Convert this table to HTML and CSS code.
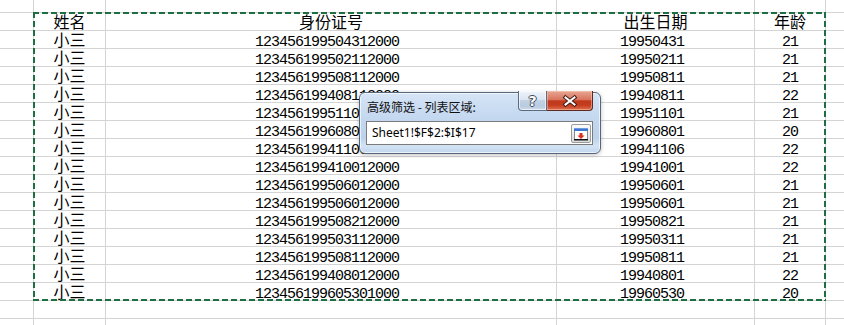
FILE: index.html
```html
<!DOCTYPE html>
<html lang="zh-CN">
<head>
<meta charset="utf-8">
<title>高级筛选</title>
<link rel="stylesheet" href="styles.css">
</head>
<body>
<div class="sheet">
  <div class="grid">
    <div class="c"></div><div class="c"></div><div class="c"></div><div class="c"></div><div class="c"></div><div class="c end"></div>

    <div class="c"></div><div class="c cjk">姓名</div><div class="c cjk">身份证号</div><div class="c cjk">出生日期</div><div class="c cjk">年龄</div><div class="c end"></div>

    <div class="c"></div><div class="c cjk">小三</div><div class="c num id">123456199504312000</div><div class="c num date">19950431</div><div class="c num">21</div><div class="c end"></div>
    <div class="c"></div><div class="c cjk">小三</div><div class="c num id">123456199502112000</div><div class="c num date">19950211</div><div class="c num">21</div><div class="c end"></div>
    <div class="c"></div><div class="c cjk">小三</div><div class="c num id">123456199508112000</div><div class="c num date">19950811</div><div class="c num">21</div><div class="c end"></div>
    <div class="c"></div><div class="c cjk">小三</div><div class="c num id">123456199408112000</div><div class="c num date">19940811</div><div class="c num">22</div><div class="c end"></div>
    <div class="c"></div><div class="c cjk">小三</div><div class="c num id">123456199511012000</div><div class="c num date">19951101</div><div class="c num">21</div><div class="c end"></div>
    <div class="c"></div><div class="c cjk">小三</div><div class="c num id">123456199608012000</div><div class="c num date">19960801</div><div class="c num">20</div><div class="c end"></div>
    <div class="c"></div><div class="c cjk">小三</div><div class="c num id">123456199411062000</div><div class="c num date">19941106</div><div class="c num">22</div><div class="c end"></div>
    <div class="c"></div><div class="c cjk">小三</div><div class="c num id">123456199410012000</div><div class="c num date">19941001</div><div class="c num">22</div><div class="c end"></div>
    <div class="c"></div><div class="c cjk">小三</div><div class="c num id">123456199506012000</div><div class="c num date">19950601</div><div class="c num">21</div><div class="c end"></div>
    <div class="c"></div><div class="c cjk">小三</div><div class="c num id">123456199506012000</div><div class="c num date">19950601</div><div class="c num">21</div><div class="c end"></div>
    <div class="c"></div><div class="c cjk">小三</div><div class="c num id">123456199508212000</div><div class="c num date">19950821</div><div class="c num">21</div><div class="c end"></div>
    <div class="c"></div><div class="c cjk">小三</div><div class="c num id">123456199503112000</div><div class="c num date">19950311</div><div class="c num">21</div><div class="c end"></div>
    <div class="c"></div><div class="c cjk">小三</div><div class="c num id">123456199508112000</div><div class="c num date">19950811</div><div class="c num">21</div><div class="c end"></div>
    <div class="c"></div><div class="c cjk">小三</div><div class="c num id">123456199408012000</div><div class="c num date">19940801</div><div class="c num">22</div><div class="c end"></div>
    <div class="c"></div><div class="c cjk">小三</div><div class="c num id">123456199605301000</div><div class="c num date">19960530</div><div class="c num">20</div><div class="c end"></div>

    <div class="c"></div><div class="c"></div><div class="c"></div><div class="c"></div><div class="c"></div><div class="c end"></div>

    <div class="c last"></div><div class="c last"></div><div class="c last"></div><div class="c last"></div><div class="c last"></div><div class="c last end"></div>
  </div>

  <div class="marquee"></div>

  <div class="dialog">
    <div class="titlebar">
      <span class="title">高级筛选 - 列表区域:</span>
      <div class="caption-buttons">
        <div class="btn-help"><span class="qmark">?</span></div>
        <div class="btn-close">
          <svg width="46" height="20" viewBox="0 0 46 20">
            <path d="M18.5 6.5 L27.5 13.5 M27.5 6.5 L18.5 13.5" stroke="#3b1a14" stroke-width="4" stroke-linecap="square" fill="none"/>
            <path d="M18.5 6.5 L27.5 13.5 M27.5 6.5 L18.5 13.5" stroke="#ffffff" stroke-width="2" stroke-linecap="square" fill="none"/>
          </svg>
        </div>
      </div>
    </div>
    <div class="refedit">
      <span class="reftext">Sheet1!$F$2:$I$17</span>
      <div class="collapse">
        <svg width="16" height="14" viewBox="0 0 16 14">
          <rect x="1.5" y="1.5" width="13" height="11" fill="#ffffff" stroke="#8a8a8a"/>
          <rect x="1" y="1" width="14" height="3" fill="#3b76cf"/>
          <rect x="1" y="1" width="14" height="1" fill="#6c9be0"/>
          <rect x="1" y="12" width="14" height="1.5" fill="#111111"/>
          <path d="M6.5 6 H9.5 V8.5 H11.5 L8 12 L4.5 8.5 H6.5 Z" fill="#d8301c"/>
        </svg>
      </div>
    </div>
  </div>
</div>
</body>
</html>
```

FILE: styles.css
```css
html, body {
  margin: 0;
  padding: 0;
  background: #ffffff;
}

.sheet {
  position: relative;
  width: 844px;
  height: 325px;
  overflow: hidden;
  background: #ffffff;
}

.grid {
  display: grid;
  grid-template-columns: 34px 72px 451px 198px 71px 1fr;
  grid-template-rows: 13px repeat(17, 18px) 1fr;
  height: 325px;
}

.c {
  box-sizing: border-box;
  border-right: 1px solid #d4d4d4;
  border-bottom: 1px solid #d4d4d4;
  text-align: center;
  white-space: nowrap;
  overflow: visible;
  color: #000000;
}

.c.end {
  border-right: none;
}

.c.last {
  border-bottom: none;
}

.cjk {
  font-family: "Noto Sans CJK SC", "Noto Sans CJK JP", sans-serif;
  font-size: 16px;
  line-height: 17px;
}

.num {
  font-family: "Liberation Mono", "DejaVu Sans Mono", monospace;
  font-size: 15px;
  letter-spacing: -1px;
  line-height: 17px;
  padding-top: 3px;
}

.num.id {
  padding-right: 8px;
}

.num.date {
  padding-right: 7px;
}

.marquee {
  position: absolute;
  left: 33px;
  top: 12px;
  width: 793px;
  height: 289px;
  background:
    repeating-linear-gradient(90deg, #1f6e43 0 6px, transparent 6px 9px) left top / 100% 2px no-repeat,
    repeating-linear-gradient(90deg, #1f6e43 0 6px, transparent 6px 9px) left bottom / 100% 2px no-repeat,
    repeating-linear-gradient(180deg, #1f6e43 0 6px, transparent 6px 9px) left top / 2px 100% no-repeat,
    repeating-linear-gradient(180deg, #1f6e43 0 6px, transparent 6px 9px) right top / 2px 100% no-repeat;
}

/* Dialog */
.dialog {
  position: absolute;
  left: 359px;
  top: 92px;
  width: 242px;
  height: 62px;
  box-sizing: border-box;
  border: 1px solid #56677d;
  border-radius: 6px;
  padding: 0 7px 0 6px;
  display: flex;
  flex-direction: column;
  background:
    linear-gradient(180deg, #d6e5f6 0%, #c4d8f0 40%, #bcd2ec 75%, #d3e3f5 88%, #c2d6ee 100%);
  box-shadow: inset 0 0 0 1px rgba(255, 255, 255, 0.65), 0 1px 4px rgba(0, 0, 0, 0.25);
}

.titlebar {
  display: flex;
  align-items: flex-start;
  height: 28px;
}

.title {
  font-family: "Noto Sans CJK SC", "Noto Sans CJK JP", sans-serif;
  font-size: 12px;
  line-height: 17px;
  padding-top: 5px;
  padding-left: 1px;
  color: #111111;
  white-space: nowrap;
}

.caption-buttons {
  margin-left: auto;
  margin-top: -2px;
  display: flex;
}

.btn-help {
  box-sizing: border-box;
  width: 29px;
  height: 20px;
  border: 1px solid #5a6c84;
  border-top: none;
  border-radius: 0 0 0 4px;
  background: linear-gradient(180deg, #eef3fa 0%, #dbe5f1 45%, #c3d2e5 50%, #b9cbe0 80%, #cfdcec 100%);
  box-shadow: inset 0 0 0 1px rgba(255, 255, 255, 0.6);
  display: flex;
  align-items: center;
  justify-content: center;
}

.qmark {
  font-family: "DejaVu Sans", sans-serif;
  font-weight: bold;
  font-size: 14px;
  line-height: 14px;
  color: #ffffff;
  text-shadow: 1px 0 0 #3c4a5c, -1px 0 0 #3c4a5c, 0 1px 0 #3c4a5c, 0 -1px 0 #3c4a5c;
}

.btn-close {
  box-sizing: border-box;
  width: 46px;
  height: 20px;
  border: 1px solid #5e2a20;
  border-left: none;
  border-top: none;
  border-radius: 0 0 4px 0;
  background: linear-gradient(180deg, #e8a593 0%, #d9755e 45%, #c2381b 52%, #c43d1f 75%, #e0704f 100%);
  box-shadow: inset 0 0 0 1px rgba(255, 220, 200, 0.45);
  position: relative;
}

.btn-close svg {
  position: absolute;
  left: 0;
  top: 0;
  display: block;
}

.refedit {
  box-sizing: border-box;
  height: 24px;
  border: 1px solid #7b7b7b;
  background: #ffffff;
  display: flex;
  align-items: flex-start;
  padding: 1px 1px 0 5px;
}

.reftext {
  font-family: "Noto Sans", "Open Sans", sans-serif;
  font-size: 12px;
  line-height: 20px;
  color: #000000;
  white-space: nowrap;
}

.collapse {
  margin-left: auto;
  margin-top: 1px;
  box-sizing: border-box;
  width: 20px;
  height: 19px;
  border: 1px solid #9b9b9b;
  border-radius: 2px;
  background: linear-gradient(180deg, #fbfbfb 0%, #ececec 50%, #dcdcdc 100%);
  display: flex;
  align-items: center;
  justify-content: center;
}

.collapse svg {
  display: block;
}
```
